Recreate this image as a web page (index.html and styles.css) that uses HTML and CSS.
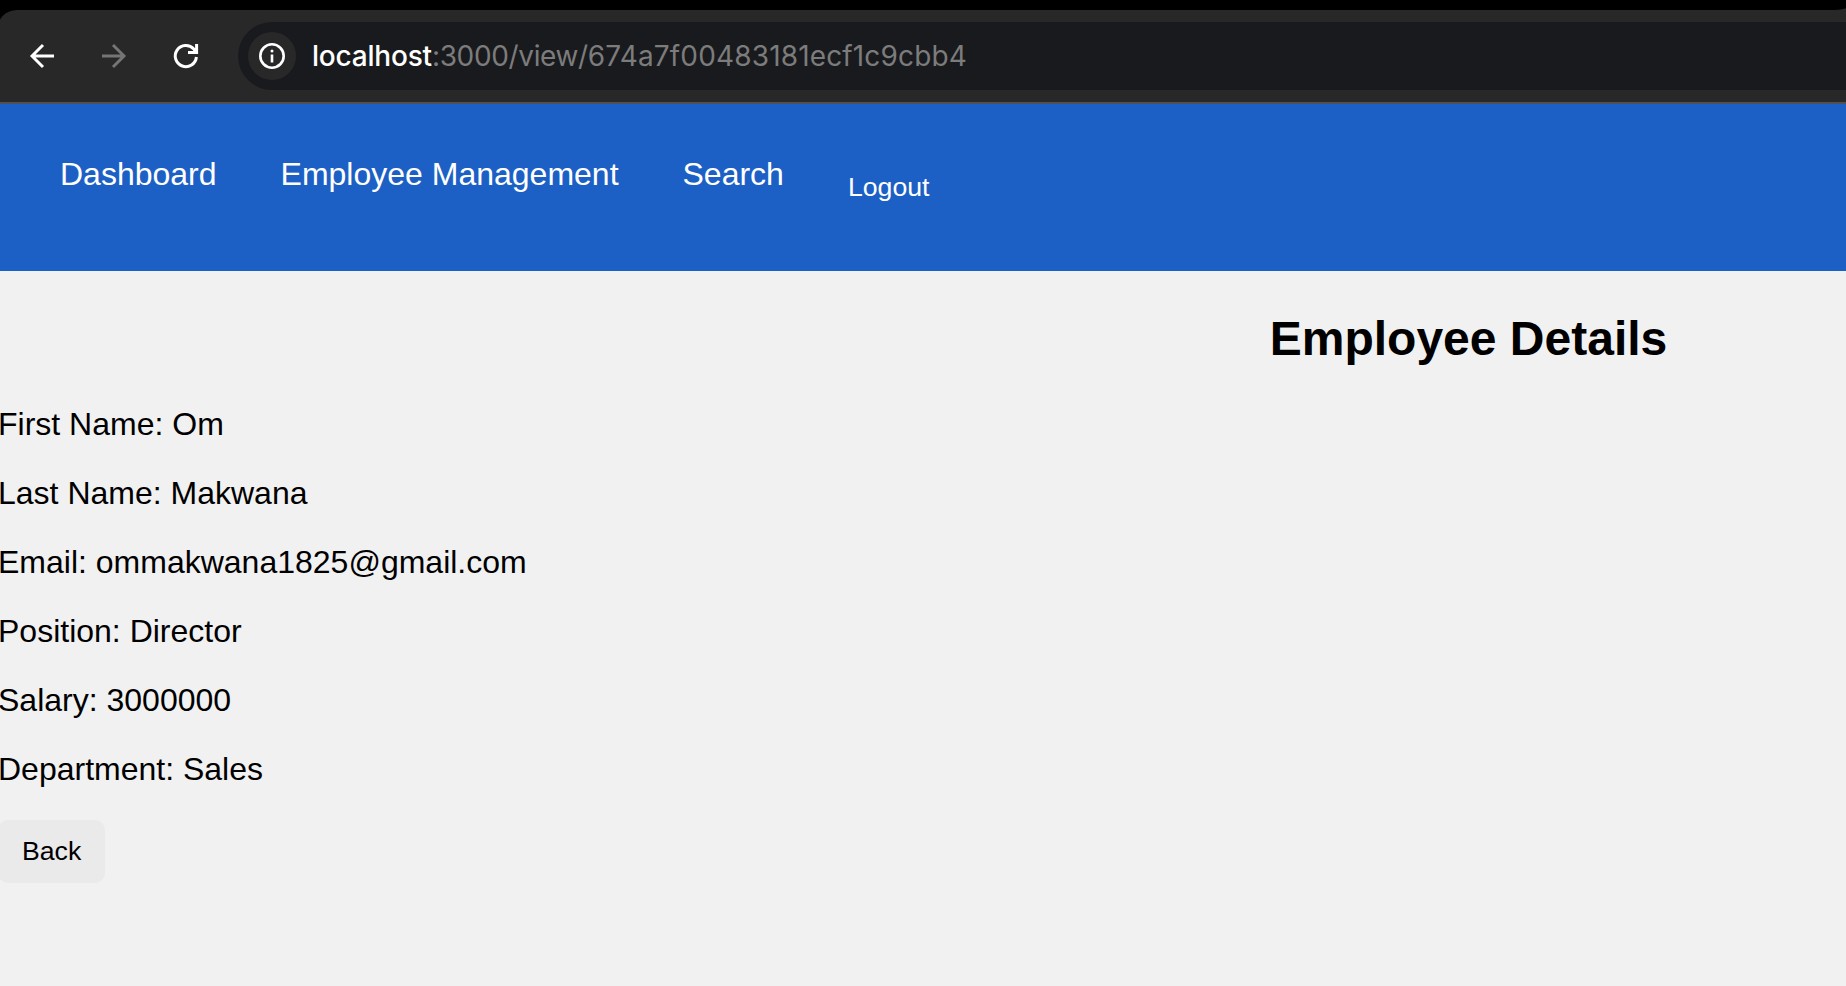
FILE: index.html
```html
<!DOCTYPE html>
<html lang="en">
<head>
<meta charset="utf-8">
<title>Employee Details</title>
<link rel="stylesheet" href="styles.css">
</head>
<body>
<header class="browser">
  <div class="tab-strip"></div>
  <div class="toolbar">
    <svg class="icon" width="24" height="24" viewBox="0 0 24 24" fill="none" stroke="#fff" stroke-width="2.9"><path d="M24 12H2M13 1 2 12l11 11"/></svg>
    <svg class="icon" width="24" height="24" viewBox="0 0 24 24" fill="none" stroke="#757575" stroke-width="2.9"><path d="M0 12h22M11 1l11 11-11 11"/></svg>
    <svg class="icon" width="24" height="24" viewBox="0 0 24 24" fill="none" stroke="#fff" stroke-width="3"><path d="M22.4 13A10.6 10.6 0 1 1 19.8 5L22 8.2M22.6 0v8.6H14"/></svg>
    <div class="address">
      <span class="site-info"><svg width="26" height="26" viewBox="0 0 26 26"><circle cx="13" cy="13" r="11.7" fill="none" stroke="#fff" stroke-width="2.6"/><rect x="11.7" y="11.5" width="2.6" height="8" fill="#fff"/><circle cx="13" cy="8" r="1.5" fill="#fff"/></svg></span>
      <span class="url"><span class="host">localhost</span><span class="path">:3000/view/</span><span class="record-id">674a7f00483181ecf1c9cbb4</span></span>
    </div>
  </div>
</header>
<nav class="nav">
  <a class="nav-link">Dashboard</a>
  <a class="nav-link">Employee Management</a>
  <a class="nav-link">Search</a>
  <button class="logout">Logout</button>
</nav>
<main class="details">
  <h2 class="title">Employee Details</h2>
  <p class="field">First Name: Om</p>
  <p class="field">Last Name: Makwana</p>
  <p class="field">Email: ommakwana1825@gmail.com</p>
  <p class="field">Position: Director</p>
  <p class="field">Salary: 3000000</p>
  <p class="field">Department: Sales</p>
  <button class="back">Back</button>
</main>
</body>
</html>
```
FILE: styles.css
```css
* { box-sizing: border-box; }
html { overflow: hidden; }
body {
  margin: 0;
  width: 1846px;
  height: 986px;
  overflow: hidden;
  background: #f1f1f1;
  color: #000;
  font-family: "Liberation Sans", Arial, sans-serif;
  font-size: 32px;
}
.browser {
  height: 104px;
  background: linear-gradient(to right, #000 50px, #282828 50px);
  border-bottom: 2px solid #515151;
  overflow: hidden;
}
.tab-strip {
  width: 1855px;
  height: 10px;
  background: #000;
  border-bottom-right-radius: 20px 10px;
}
.toolbar {
  display: flex;
  align-items: center;
  height: 92px;
  margin-left: -3px;
  padding: 0 0 0 33px;
  background: #282828;
  border-top-left-radius: 20px;
}
.icon { flex: none; margin-right: 48px; overflow: visible; }
.address {
  display: flex;
  align-items: center;
  flex: 1;
  height: 68px;
  margin-left: -8px;
  padding-left: 10px;
  background: #191a1d;
  border-radius: 34px 0 0 34px;
}
.site-info {
  display: flex;
  align-items: center;
  justify-content: center;
  width: 48px;
  height: 48px;
  border-radius: 50%;
  background: #282828;
}
.url {
  margin-left: 16px;
  font-family: Inter, sans-serif;
  font-size: 28px;
  line-height: 34px;
  white-space: nowrap;
}
.host { color: #fff; font-weight: 500; letter-spacing: -0.2px; }
.path { color: #7c7c7c; letter-spacing: -0.35px; }
.record-id { color: #7c7c7c; letter-spacing: 0.15px; }
.nav {
  display: flex;
  align-items: flex-start;
  height: 167px;
  padding: 52px 0 0 60px;
  background: #1d60c5;
  color: #fff;
}
.nav-link { margin-right: 64px; line-height: 37px; }
.logout {
  margin: 16px 0 0;
  padding: 0;
  border: 0;
  background: none;
  color: #fff;
  font: 26.67px/30px "Liberation Sans", Arial, sans-serif;
}
.details { width: 2941px; margin-left: -2px; padding-top: 40px; }
.title {
  margin: 0 0 40px;
  font-size: 48px;
  line-height: 55px;
  text-align: center;
}
.field { margin: 0 0 32px; line-height: 37px; }
.back {
  display: block;
  width: 107px;
  height: 63px;
  padding: 0 0 2px 24px;
  border: 0;
  border-radius: 10px;
  background: #eaeaea;
  color: #000;
  font: 26.67px/30px "Liberation Sans", Arial, sans-serif;
  text-align: left;
}
```
